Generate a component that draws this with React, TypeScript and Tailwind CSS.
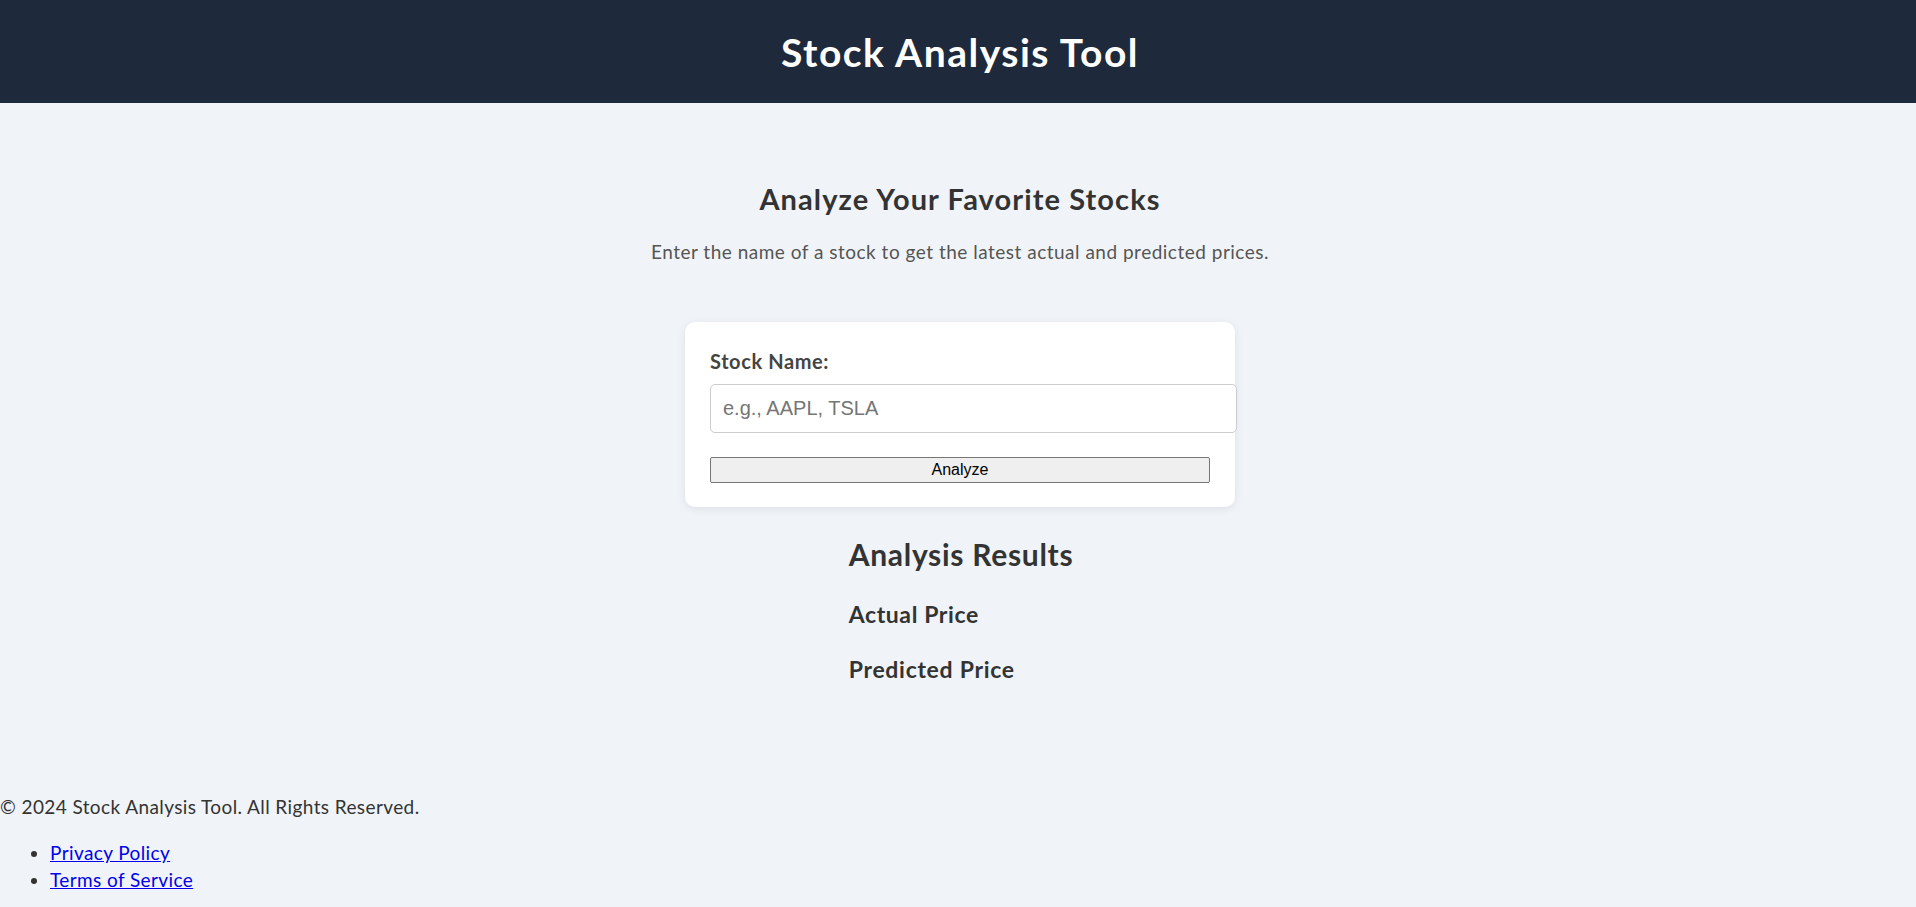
import React from "react";

export default function App() {
  return (
    <div className="min-h-screen bg-[#f0f4f8] font-['Lato',sans-serif] text-[#333]">
      <header className="h-[103px] bg-[#1e293b] flex items-center justify-center pl-[4px] pt-[2px]">
        <h1 className="text-[39px] font-bold leading-none tracking-[1.5px] text-white">Stock Analysis Tool</h1>
      </header>

      <main className="flex flex-col items-center pl-[4px]">
        <h2 className="mt-[81px] text-[29px] font-bold leading-none tracking-[1.1px] text-[#333]">
          Analyze Your Favorite Stocks
        </h2>
        <p className="mt-[29px] text-[19px] leading-none tracking-[0.5px] text-[#555]">
          Enter the name of a stock to get the latest actual and predicted prices.
        </p>

        <div className="mt-[61px] w-[550px] rounded-[10px] bg-white px-[25px] pt-[29px] pb-[24px] shadow-[0_2px_10px_rgba(0,0,0,0.08)]">
          <label className="block text-[20px] font-bold leading-none tracking-[0.6px] text-[#444]">Stock Name:</label>
          <input
            type="text"
            placeholder="e.g., AAPL, TSLA"
            className="mt-[13px] block h-[49px] w-[527px] rounded-[5px] border border-[#ccc] bg-white px-[12px] font-['Liberation_Sans',Arial,sans-serif] text-[20px] text-[#333] placeholder:text-[#757575] outline-none"
          />
          <button className="mt-[24px] block h-[26px] w-[500px] rounded-[2px] border border-[#767676] bg-[#efefef] font-['Liberation_Sans',Arial,sans-serif] text-[16px] leading-none text-black">
            Analyze
          </button>
        </div>

        <div className="mt-[32px] pl-[2px] text-left">
          <h2 className="text-[30px] font-bold leading-none tracking-[0.7px] text-[#333]">Analysis Results</h2>
          <h3 className="mt-[34px] text-[23px] font-bold leading-none tracking-[0.6px] text-[#333]">Actual Price</h3>
          <h3 className="mt-[32px] text-[23px] font-bold leading-none tracking-[0.7px] text-[#333]">Predicted Price</h3>
        </div>
      </main>

      <footer className="mt-[116px] text-[19px] tracking-[0.4px] text-[#333]">
        <p className="leading-none">© 2024 Stock Analysis Tool. All Rights Reserved.</p>
        <ul className="mt-[23px] list-disc pl-[50px] leading-[27px]">
          <li>
            <a href="#" className="text-[#0000ee] underline">Privacy Policy</a>
          </li>
          <li>
            <a href="#" className="text-[#0000ee] underline">Terms of Service</a>
          </li>
        </ul>
      </footer>
    </div>
  );
}
